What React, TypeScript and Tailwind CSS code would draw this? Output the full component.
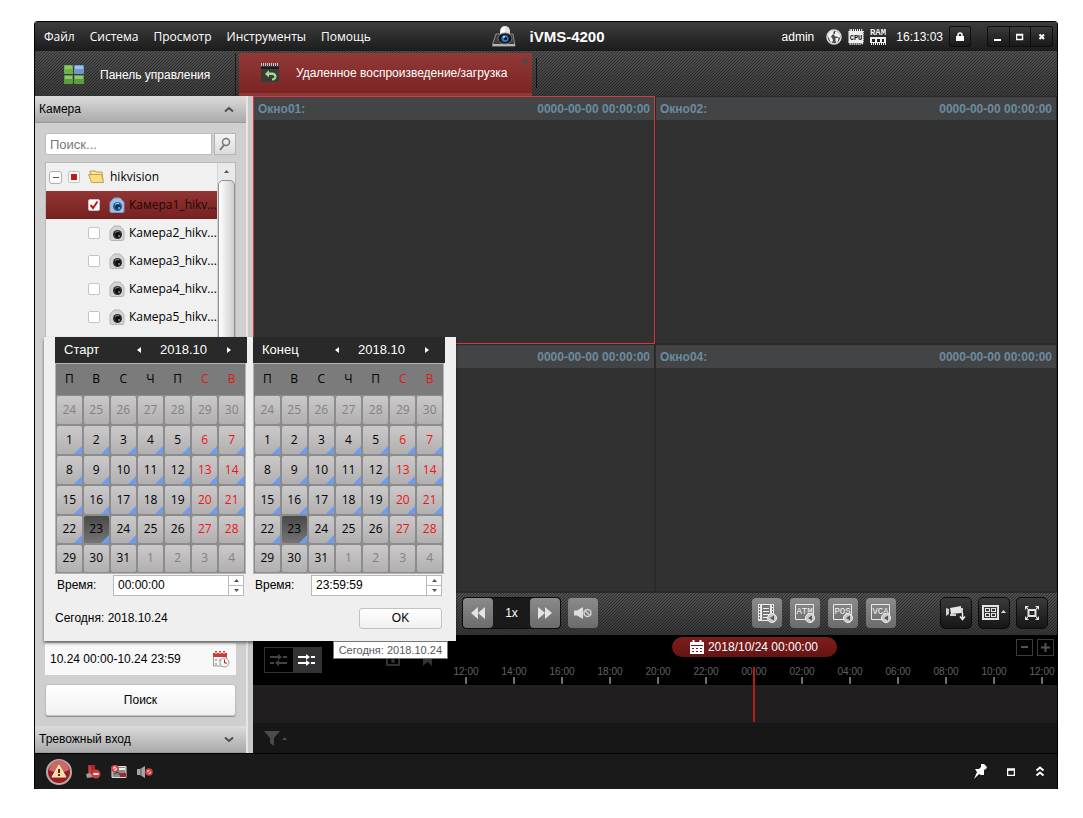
import { useState } from "react";
import type { ReactNode } from "react";
import clsx from "clsx";

const MENU = ["Файл", "Система", "Просмотр", "Инструменты", "Помощь"];
const CAMERAS = [1, 2, 3, 4, 5];
const WEEKDAYS = ["П", "В", "С", "Ч", "П", "С", "В"];
const HOURS = ["12:00", "14:00", "16:00", "18:00", "20:00", "22:00", "00:00", "02:00", "04:00", "06:00", "08:00", "10:00", "12:00"];

// October 2018 starts on Monday, the grid opens with the last week of September
const DAYS = [
  ...[24, 25, 26, 27, 28, 29, 30].map((day) => ({ day, current: false })),
  ...Array.from({ length: 31 }, (_, i) => ({ day: i + 1, current: true })),
  ...[1, 2, 3, 4].map((day) => ({ day, current: false })),
];
const WEEKS = [0, 1, 2, 3, 4, 5].map((w) => DAYS.slice(w * 7, w * 7 + 7));
const LAST_RECORDED = 24;

function Logo() {
  return (
    <svg width="24" height="22" viewBox="0 0 24 22">
      <path d="M4 8h17l2 12H0z" fill="#3c3c3c" stroke="#8c8c8c" />
      <path d="M1 19h22" stroke="#b5b5b5" strokeWidth="2" />
      <path d="M8 5a5 5 0 0 1 10 0v6H8z" fill="#e2e2e2" />
      <path d="M9 5a3 4 0 0 1 4-4v9H9z" fill="#fff" />
      <ellipse cx="13" cy="12.500" rx="7" ry="5.500" fill="#17181a" stroke="#777" />
      <circle cx="13" cy="12.500" r="3.500" fill="#2d78bf" />
      <circle cx="13.500" cy="12.500" r="1.500" fill="#08101c" />
      <circle cx="12" cy="11" r="1" fill="#bfe4ff" />
    </svg>
  );
}

function GlobeIcon() {
  return (
    <svg width="16" height="16" viewBox="0 0 16 16">
      <circle cx="8" cy="8" r="7" fill="#4c4c4c" stroke="#dcdcdc" strokeWidth="1.500" />
      <path d="M2 5l3-3h3l-1 2 1 1-2 1-1 2 1 1 1 2-1 3-2-2-1-3-1-1z" fill="#f1f1f1" />
      <path d="M9 2.500l2 0 3 3v3l-2 0-1-1-2 0-1-2 1-1z" fill="#f1f1f1" />
      <path d="M9.500 9l3 0-.500 3-1.500 2-1-2z" fill="#f1f1f1" />
    </svg>
  );
}

function CpuIcon() {
  return (
    <svg width="16" height="16" viewBox="0 0 16 16">
      <rect x="1" y="1" width="14" height="14" rx="2" fill="none" stroke="#eee" strokeWidth="2" strokeDasharray="1 1" />
      <rect x="1" y="2" width="14" height="12" fill="#eee" />
      <text x="8" y="10.500" textAnchor="middle" fontSize="7" fontWeight="bold" fill="#111" fontFamily="Liberation Mono, monospace">CPU</text>
    </svg>
  );
}

function RamIcon() {
  return (
    <svg width="16" height="16" viewBox="0 0 16 16">
      <text x="8" y="6" textAnchor="middle" fontSize="9" fontWeight="bold" fill="#eee" fontFamily="Liberation Mono, monospace">RAM</text>
      <rect x="0" y="8" width="16" height="6" fill="#eee" />
      <path d="M2 10h3v3H2zM7 10h3v3H7zM12 10h2v3h-2z" fill="#222" />
      <path d="M1 15h15" stroke="#eee" strokeWidth="2" strokeDasharray="1 1" />
    </svg>
  );
}

function CameraIcon({ active = false }: { active?: boolean }) {
  return (
    <svg width="16" height="16" viewBox="0 0 16 16">
      <path d="M1 5.500L5 1h6l4 4.500V14a1.500 1.500 0 0 1-1.500 1.500h-11A1.500 1.500 0 0 1 1 14z" fill={active ? "#9fc2ea" : "#d3d3d3"} stroke={active ? "#7f9fca" : "#b5b5b5"} />
      <circle cx="8.500" cy="9.500" r="4.500" fill={active ? "#2a5a96" : "#2c2a2b"} />
      <circle cx="9" cy="10" r="2.500" fill={active ? "#0f2c55" : "#0b0b0c"} />
      <path d="M6 7.500a3.500 3.500 0 0 1 4-1" stroke={active ? "#b8dcff" : "#b46a5f"} fill="none" />
      <circle cx="10" cy="11" r="1" fill={active ? "#8bc0f5" : "#6d90bd"} />
    </svg>
  );
}

function Chevron({ up = false }: { up?: boolean }) {
  return (
    <svg width="10" height="7" viewBox="0 0 10 7">
      <path d={up ? "M1 5.500L5 2l4 3.500" : "M1 1.500L5 5l4-3.500"} fill="none" stroke="#4d4d4d" strokeWidth="2" />
    </svg>
  );
}

function AccordionHeader({ title, up }: { title: string; up?: boolean }) {
  return (
    <button className="flex h-[27px] w-full shrink-0 items-center justify-between border-b border-[#9a9a9a] bg-gradient-to-b from-[#dcdcdc] to-[#aaaaaa] pr-3 pl-1">
      <span>{title}</span>
      <Chevron up={up} />
    </button>
  );
}

function Checkbox({ state, label, onChange }: { state: "on" | "off" | "partial"; label: string; onChange?: () => void }) {
  return (
    <span className="relative flex size-3 shrink-0">
      <input
        type="checkbox"
        aria-label={label}
        checked={state !== "off"}
        onChange={() => onChange?.()}
        className="size-3 appearance-none rounded-[2px] border border-[#c4c4c4] bg-white"
      />
      {state === "on" && (
        <svg className="pointer-events-none absolute inset-0" width="12" height="12" viewBox="0 0 12 12">
          <path d="M2.500 6l2.500 3 4.500-6.500" fill="none" stroke="#c4161c" strokeWidth="2" />
        </svg>
      )}
      {state === "partial" && <span className="pointer-events-none absolute inset-[3px] bg-[#c01a12]" />}
    </span>
  );
}

function VideoPane({ title, active }: { title?: string; active?: boolean }) {
  return (
    <div className={clsx("flex flex-col border bg-[#313131]", active ? "border-[#d5393c]" : "border-[#29292a]")}>
      <div className="flex h-[23px] items-center bg-[#434446] px-1 font-bold text-[#6b8ba0]">
        {title && <span>{title}</span>}
        <span className="ml-auto">0000-00-00 00:00:00</span>
      </div>
    </div>
  );
}

function GreyButton({ label, children }: { label: string; children: ReactNode }) {
  return (
    <button aria-label={label} className="flex size-[30px] items-center justify-center rounded-[4px] bg-gradient-to-b from-[#8b8b8b] to-[#6c6c6c]">
      {children}
    </button>
  );
}

function DarkButton({ label, children }: { label: string; children: ReactNode }) {
  return (
    <button aria-label={label} className="flex size-8 items-center justify-center rounded-[5px] border border-[#0c0c0c] bg-gradient-to-b from-[#3b3b3b] to-[#161616]">
      {children}
    </button>
  );
}

function PlayBadge() {
  return (
    <>
      <circle cx="16" cy="16" r="4.500" fill="#c9c9c9" stroke="#f2f2f2" />
      <path d="M18 13.500v5L14 16z" fill="#555" />
    </>
  );
}

function TagIcon({ text }: { text: string }) {
  return (
    <svg width="22" height="22" viewBox="0 0 22 22">
      <path d="M1.500 2.500h18v15h-18z" fill="none" stroke="#e8e8e8" />
      <text x="10.500" y="12" textAnchor="middle" fontSize="9" fill="#f4f4f4" fontFamily="Liberation Mono, monospace">{text}</text>
      <PlayBadge />
    </svg>
  );
}

function Calendar({ title, time }: { title: string; time: string }) {
  const [selected, setSelected] = useState(23);
  const [value, setValue] = useState(time);

  return (
    <section className="w-48">
      <header className="flex h-[26px] items-center bg-[#292929] pl-[9px] text-[13px] text-white">
        <span className="w-[70px]">{title}</span>
        <button aria-label="Предыдущий месяц" className="flex w-[9px] justify-center">
          <svg width="4" height="6" viewBox="0 0 4 6"><path d="M4 0v6L0 3z" fill="#fff" /></svg>
        </button>
        <span className="flex-1 text-center">2018.10</span>
        <button aria-label="Следующий месяц" className="mr-[14px] flex w-[9px] justify-center">
          <svg width="4" height="6" viewBox="0 0 4 6"><path d="M0 0v6l4-3z" fill="#fff" /></svg>
        </button>
      </header>
      <table className="w-[191px] table-fixed border-collapse border border-[#b4b4b4] bg-[#8c8c8c] text-center font-[Open_Sans,Noto_Sans,sans-serif]">
        <thead>
          <tr className="h-[31px] bg-[#7b7b7b]">
            {WEEKDAYS.map((d, i) => (
              <th key={i} className={clsx("p-0 font-normal", i > 4 ? "text-[#e01818]" : "text-black")}>{d}</th>
            ))}
          </tr>
        </thead>
        <tbody>
          {WEEKS.map((week, w) => (
            <tr key={w}>
              {week.map(({ day, current }, i) => {
                const isSelected = current && day === selected;
                return (
                  <td key={i} className="p-px">
                    <button
                      onClick={() => current && setSelected(day)}
                      className={clsx(
                        "relative block w-full overflow-hidden rounded-[2px]",
                        w < 4 ? "h-7" : "h-[27px]",
                        isSelected ? "bg-gradient-to-b from-[#4a4a4a] to-[#757575]" : "bg-gradient-to-b from-[#cbc9c9] to-[#b1afaf]",
                        !current ? "text-[#828282]" : i > 4 ? "text-[#f01414]" : "text-black"
                      )}
                    >
                      {day}
                      {current && day <= LAST_RECORDED && (
                        <svg className="absolute right-0 bottom-0" width="8" height="8" viewBox="0 0 8 8">
                          <path d="M8 0v8H0z" fill="#6b9df8" />
                        </svg>
                      )}
                    </button>
                  </td>
                );
              })}
            </tr>
          ))}
        </tbody>
      </table>
      <div className="mt-px flex h-[21px] items-center pl-[2px]">
        <label htmlFor={"time-" + time} className="w-14">Время:</label>
        <div className="flex h-[21px] w-[131px] border border-[#b9b9b9] bg-white">
          <input
            id={"time-" + time}
            value={value}
            onChange={(e) => setValue(e.target.value)}
            className="min-w-0 flex-1 bg-transparent pl-1 outline-none"
          />
          <div className="flex w-[15px] flex-col border-l border-[#b9b9b9]">
            <button aria-label="Больше" className="flex flex-1 items-center justify-center">
              <svg width="5" height="3" viewBox="0 0 5 3"><path d="M0 3h5L2.500 0z" fill="#555" /></svg>
            </button>
            <button aria-label="Меньше" className="flex flex-1 items-center justify-center border-t border-[#b9b9b9]">
              <svg width="5" height="3" viewBox="0 0 5 3"><path d="M0 0h5L2.500 3z" fill="#555" /></svg>
            </button>
          </div>
        </div>
      </div>
    </section>
  );
}

function DatePopup() {
  return (
    <div className="absolute top-[315px] left-[9px] w-[412px] bg-[#efefef] px-[11px] shadow-[0_2px_3px_rgba(0,0,0,0.5)]">
      <div className="flex gap-[6px]">
        <Calendar title="Старт" time="00:00:00" />
        <Calendar title="Конец" time="23:59:59" />
      </div>
      <div className="flex h-[45px] items-center justify-between pr-[3px]">
        <span>Сегодня: 2018.10.24</span>
        <button className="h-[21px] w-[83px] rounded-[3px] border border-[#c2c2c2] bg-gradient-to-b from-white to-[#f0f0f0]">OK</button>
      </div>
      <div role="tooltip" className="absolute top-full right-2 flex h-[18px] items-center border border-[#767676] bg-white px-[5px] text-[11px] text-[#575757]">
        Сегодня: 2018.10.24
      </div>
    </div>
  );
}

function TitleBar() {
  return (
    <header className="grid h-[29px] grid-cols-[1fr_auto_1fr] items-center bg-gradient-to-b from-[#3d3d3d] to-[#1c1c1c] pr-1 pl-[9px] text-white">
      <nav className="flex gap-[15px] font-[Open_Sans,Noto_Sans,sans-serif]">
        {MENU.map((item) => (
          <button key={item}>{item}</button>
        ))}
      </nav>
      <div className="flex items-center gap-[13px]">
        <Logo />
        <h1 className="text-[15px] font-bold">iVMS-4200</h1>
      </div>
      <div className="flex items-center justify-end">
        <span className="mr-3">admin</span>
        <div className="mr-[10px] flex gap-[6px]">
          <GlobeIcon />
          <CpuIcon />
          <RamIcon />
        </div>
        <span className="mr-[6px]">16:13:03</span>
        <button aria-label="Блокировка" className="mr-4 flex h-[21px] w-[22px] items-center justify-center rounded-[2px] border border-[#0e0e0e] bg-gradient-to-b from-[#3a3a3a] to-[#191919]">
          <svg width="8" height="10" viewBox="0 0 8 10">
            <path d="M2 5V3a2 2 0 0 1 4 0v2" fill="none" stroke="#fff" strokeWidth="1.500" />
            <path d="M0 4h8v5H0z" fill="#fff" />
          </svg>
        </button>
        <div className="flex h-[21px] w-[66px] divide-x divide-[#0c0c0c] rounded-[2px] border border-[#0e0e0e] bg-gradient-to-b from-[#3a3a3a] to-[#191919]">
          <button aria-label="Свернуть" className="flex flex-1 items-center justify-center">
            <svg width="8" height="8" viewBox="0 0 8 8"><path d="M0 6h7v2H0z" fill="#fff" /></svg>
          </button>
          <button aria-label="Развернуть" className="flex flex-1 items-center justify-center">
            <svg width="8" height="8" viewBox="0 0 8 8"><path d="M.500 1.500h6v5h-6zM0 2h7" fill="none" stroke="#fff" strokeWidth="1.500" /></svg>
          </button>
          <button aria-label="Закрыть" className="flex flex-1 items-center justify-center">
            <svg width="8" height="8" viewBox="0 0 8 8"><path d="M1.500 1.500l4.500 4.500M6 1.500L1.500 6" stroke="#fff" strokeWidth="2" /></svg>
          </button>
        </div>
      </div>
    </header>
  );
}

function TabBar() {
  return (
    <div className="flex h-[45px] items-end bg-[linear-gradient(rgba(0,0,0,0),rgba(0,0,0,0.25)),linear-gradient(135deg,#505050_25%,#303030_25%_50%,#505050_50%_75%,#303030_75%)] bg-[length:auto,3px_3px] text-white">
      <button className="flex h-[43px] w-[201px] items-center gap-4 border-r border-[#1b1b1b] pl-[29px]">
        <svg width="20" height="20" viewBox="0 0 20 20">
          <rect x="0" y="0" width="9" height="9" rx="1" fill="#6fb04c" />
          <rect x="10" y="0" width="10" height="9" rx="1" fill="#7197c8" />
          <rect x="0" y="10" width="9" height="9" rx="1" fill="#5b9e3c" />
          <rect x="10" y="10" width="10" height="9" rx="1" fill="#5b9e3c" />
          <path d="M1 1h7v3H1zM1 11h7v3H1zM11 11h8v3h-8z" fill="#8dc96c" />
          <path d="M11 1h8v3h-8z" fill="#a0c0e8" />
        </svg>
        <span>Панель управления</span>
      </button>
      <div className="relative ml-[3px] flex h-[43px] w-[293px] items-center border-b-[3px] border-[#8f3836] bg-gradient-to-b from-[#923938] to-[#7c2423]">
        <button className="flex h-full items-center gap-4 pl-[22px]">
          <svg width="19" height="20" viewBox="0 0 19 20">
            <rect x="0" y="2" width="18" height="17" fill="#3a3c3b" />
            <path d="M0 1.500h18" stroke="#c9c9c9" strokeWidth="3" strokeDasharray="1 1" />
            <path d="M0 4h18v2H0z" fill="#1c1c1c" />
            <path d="M8 7l-4 4 4 3.500V12h3c3 0 3 3.500 0 3.500v2c6 0 6-8 0-8H8z" fill="#a5d98c" />
          </svg>
          <span>Удаленное воспроизведение/загрузка</span>
        </button>
        <button aria-label="Закрыть вкладку" className="absolute top-[5px] right-[3px]">
          <svg width="7" height="7" viewBox="0 0 7 7"><path d="M1 1l5 5M6 1L1 6" stroke="#4c4a4a" strokeWidth="2" /></svg>
        </button>
      </div>
      <div className="mb-2 ml-1 h-[30px] w-px bg-[#111]" />
    </div>
  );
}

function Sidebar() {
  const [checked, setChecked] = useState<number[]>([1]);
  const toggle = (n: number) => setChecked((list) => (list.includes(n) ? list.filter((c) => c !== n) : [...list, n]));

  return (
    <aside className="flex w-[218px] shrink-0 border-r-[5px] border-[#c9c9c9] bg-[#cfcfcf] text-black">
      <div className="flex min-w-0 flex-1 flex-col border-r-2 border-[#e6e6e6]">
        <AccordionHeader title="Камера" up />
        <div className="flex flex-1 flex-col px-[10px] py-[10px]">
          <div className="flex gap-[2px]">
            <input placeholder="Поиск..." aria-label="Поиск" className="h-[22px] w-[167px] rounded-[2px] border border-[#bcbcbc] bg-white pl-1 text-[13px] outline-none placeholder:text-[#777]" />
            <button aria-label="Найти" className="flex h-[22px] flex-1 items-center justify-center border border-[#b5b5b5] bg-gradient-to-b from-[#f4f4f4] to-[#dcdcdc]">
              <svg width="12" height="14" viewBox="0 0 12 14">
                <circle cx="7" cy="5" r="3.500" fill="none" stroke="#777" strokeWidth="1.500" />
                <path d="M5 8l-4 5" stroke="#777" strokeWidth="2" />
              </svg>
            </button>
          </div>
          <div className="mt-[7px] flex flex-1 border border-[#b9b9b9] bg-[#f0f0f0] font-[Open_Sans,Noto_Sans,sans-serif]">
            <ul className="w-[171px]">
              <li className="flex h-7 items-center pl-[3px]">
                <button aria-label="Свернуть группу" className="mr-[6px] flex size-[13px] items-center justify-center rounded-[3px] border border-[#b0b0b0] bg-white">
                  <span className="h-px w-[6px] bg-[#555]" />
                </button>
                <Checkbox state="partial" label="hikvision" />
                <svg className="mr-[5px] ml-2" width="17" height="14" viewBox="0 0 17 14">
                  <path d="M2 3V1h5l1 1h6l1 8-2 2z" fill="#f6e7a6" stroke="#c19a4a" />
                  <path d="M.500 4.500h13l2 8h-12z" fill="#fbdd84" stroke="#c9a04e" />
                </svg>
                <span>hikvision</span>
              </li>
              {CAMERAS.map((n) => (
                <li key={n} className={clsx("flex h-7 items-center pl-[42px]", n === 1 && "bg-gradient-to-b from-[#923534] to-[#762120]")}>
                  <Checkbox state={checked.includes(n) ? "on" : "off"} label={"Камера" + n} onChange={() => toggle(n)} />
                  <span className="mr-1 ml-[9px]"><CameraIcon active={n === 1} /></span>
                  <span className={n === 1 ? "text-[#1c0707]" : undefined}>Камера{n}_hikv...</span>
                </li>
              ))}
            </ul>
            <div className="flex flex-1 flex-col border-l border-[#d5d5d5] bg-[#e9e9e9]">
              <span className="flex h-[17px] items-center justify-center">
                <svg width="5" height="3" viewBox="0 0 5 3"><path d="M0 3h5L2.500 0z" fill="#555" /></svg>
              </span>
              <span className="flex-1 rounded-t-[5px] border border-[#8f8f8f] bg-gradient-to-r from-white to-[#cecece]" />
            </div>
          </div>
          <div className="mt-[6px] flex h-8 items-center justify-between bg-[#f8f8f8] pr-[6px] pl-[5px]">
            <span>10.24 00:00-10.24 23:59</span>
            <button aria-label="Выбрать период">
              <svg width="17" height="17" viewBox="0 0 17 17">
                <path d="M.500 3h13v12H.500z" fill="#f5f5f5" stroke="#999" />
                <path d="M0 2h14v4H0z" fill="#d0383b" />
                <path d="M3 0v4M7 0v4M11 0v4" stroke="#d0383b" strokeWidth="2" />
                <path d="M3 1v2M7 1v2M11 1v2" stroke="#fff" />
                <path d="M2 8h2v2H2zM6 8h2v2H6zM2 12h2v2H2z" fill="#b5b5b5" />
                <circle cx="11.500" cy="11.500" r="4.500" fill="#f7f7f7" stroke="#999" />
                <path d="M11.500 8.500v3.500h2.500" fill="none" stroke="#c01a1a" />
              </svg>
            </button>
          </div>
          <button className="mt-[9px] h-8 rounded-[3px] border border-[#c0c0c0] bg-gradient-to-b from-white to-[#f1f1f1] shadow-[0_1px_1px_rgba(0,0,0,0.3)]">Поиск</button>
        </div>
        <AccordionHeader title="Тревожный вход" />
      </div>
    </aside>
  );
}

function PlaybackBar() {
  return (
    <div className="flex h-[43px] items-center justify-between border-t border-[#2a2a2a] bg-[linear-gradient(rgba(0,0,0,0),rgba(0,0,0,0.3)),linear-gradient(135deg,#505050_25%,#303030_25%_50%,#505050_50%_75%,#303030_75%)] bg-[length:auto,3px_3px] pr-[9px] pb-[2px] pl-[209px]">
      <div className="flex items-center gap-[7px]">
        <div className="flex items-center rounded-[4px] border border-[#0d0d0d] bg-[#1a1a1a]">
          <GreyButton label="Медленнее">
            <svg width="16" height="12" viewBox="0 0 16 12"><path d="M8 0v12L1 6zM15 0v12L8 6z" fill="#e4e4e4" /></svg>
          </GreyButton>
          <span className="w-[37px] text-center text-white">1x</span>
          <GreyButton label="Быстрее">
            <svg width="16" height="12" viewBox="0 0 16 12"><path d="M1 0v12l7-6zM8 0v12l7-6z" fill="#e4e4e4" /></svg>
          </GreyButton>
        </div>
        <GreyButton label="Звук">
          <svg width="18" height="12" viewBox="0 0 18 12">
            <path d="M0 3.500h3L9 0v12L3 8.500H0z" fill="#dedede" />
            <circle cx="13.500" cy="6" r="3.500" fill="none" stroke="#d0d0d0" strokeWidth="1.500" />
            <path d="M11 3.500l5 5" stroke="#d0d0d0" strokeWidth="1.500" />
          </svg>
        </GreyButton>
      </div>
      <div className="flex items-center gap-[44px]">
        <div className="flex gap-2">
          <GreyButton label="Записи">
            <svg width="22" height="22" viewBox="0 0 22 22">
              <path d="M2 2h16v17H2z" fill="#e4e4e4" />
              <path d="M3.500 3v15M16.500 3v15" stroke="#666" strokeDasharray="2 1" />
              <path d="M5.500 2.500h9v16h-9z" fill="#767676" stroke="#f0f0f0" />
              <path d="M7 6.500h6M7 9.500h6M7 12.500h6M7 15.500h4" stroke="#f0f0f0" />
              <PlayBadge />
            </svg>
          </GreyButton>
          <GreyButton label="ATM"><TagIcon text="ATM" /></GreyButton>
          <GreyButton label="POS"><TagIcon text="POS" /></GreyButton>
          <GreyButton label="VCA"><TagIcon text="VCA" /></GreyButton>
        </div>
        <div className="flex gap-[6px]">
          <DarkButton label="Загрузка">
            <svg width="20" height="16" viewBox="0 0 20 16">
              <path d="M4 3l11-2v7L5 9z" fill="#e6e6e6" />
              <path d="M0 3l3 1v5l-3 2zM15 3h2v5h-2zM4 9h6v2H4z" fill="#cfcfcf" />
              <path d="M16.500 8v5M14 11.500l2.500 3 2.500-3" fill="none" stroke="#eee" strokeWidth="1.500" />
            </svg>
          </DarkButton>
          <DarkButton label="Сетка окон">
            <svg width="24" height="16" viewBox="0 0 24 16">
              <path d="M0 0h17v15H0z" fill="#e4e4e4" />
              <path d="M2 2h13v11H2z" fill="#333" />
              <path d="M3 3h5v4H3zM9 3h5v4H9zM3 8h5v4H3zM9 8h5v4H9z" fill="#e4e4e4" />
              <path d="M4 4h3v2H4zM10 4h3v2h-3zM4 9h3v2H4zM10 9h3v2h-3z" fill="#333" />
              <path d="M19 8h5l-2.500-3z" fill="#ddd" />
            </svg>
          </DarkButton>
          <DarkButton label="На весь экран">
            <svg width="14" height="14" viewBox="0 0 14 14">
              <path d="M3.500 4h7v6h-7z" fill="none" stroke="#e4e4e4" strokeWidth="2" />
              <path d="M0 0h4L0 4zM14 0h-4l4 4zM0 14h4l-4-4zM14 14h-4l4-4z" fill="#e4e4e4" />
              <path d="M1 1l2 2M13 1l-2 2M1 13l2-2M13 13l-2-2" stroke="#e4e4e4" />
            </svg>
          </DarkButton>
        </div>
      </div>
    </div>
  );
}

function ModeIcon({ both }: { both?: boolean }) {
  return (
    <svg width="18" height="14" viewBox="0 0 18 14" fill="none" stroke="currentColor" strokeWidth="2">
      <path d="M0 4h9M13 4h4" />
      <path d="M8 1l4 3-4 3z" fill="currentColor" stroke="none" />
      {both ? <path d="M0 10h9M13 10h4" /> : <path d="M0 10h4M8 10h9" />}
      <path d={both ? "M8 7l4 3-4 3z" : "M9 7l-4 3 4 3z"} fill="currentColor" stroke="none" />
    </svg>
  );
}

function Timeline() {
  return (
    <div className="bg-black">
      <div className="flex h-[50px] pr-[3px]">
        <div className="flex w-[201px] shrink-0 items-center pl-[11px]">
          <div className="flex h-[26px] w-[58px] border border-[#333]">
            <button aria-label="Асинхронно" className="flex flex-1 items-center justify-center text-[#444]"><ModeIcon /></button>
            <button aria-label="Синхронно" className="flex flex-1 items-center justify-center bg-[#323235] text-white"><ModeIcon both /></button>
          </div>
          <button aria-label="Снимок" className="ml-[64px] text-[#333]">
            <svg width="14" height="12" viewBox="0 0 14 12"><path d="M1 3h3l1-2h4l1 2h3v8H1z" fill="none" stroke="currentColor" strokeWidth="2" /><circle cx="7" cy="7" r="2" fill="currentColor" /></svg>
          </button>
          <button aria-label="Метка" className="ml-[23px] text-[#333]">
            <svg width="9" height="12" viewBox="0 0 9 12"><path d="M0 0h9v12L4.500 8 0 12z" fill="currentColor" /></svg>
          </button>
        </div>
        <div className="flex flex-1 flex-col justify-between">
          <div className="grid h-6 grid-cols-[1fr_auto_1fr] items-center">
            <button className="col-start-2 flex h-5 w-[165px] items-center justify-center gap-1 rounded-full bg-gradient-to-b from-[#7c1e1d] to-[#651413] text-white">
              <svg width="14" height="14" viewBox="0 0 14 14">
                <path d="M0 2h14v12H0z" fill="#fff" />
                <path d="M3.500 0v3M10.500 0v3" stroke="#fff" strokeWidth="2" />
                <path d="M1 5.500h12" stroke="#701817" />
                <path d="M2 8h2v1H2zM6 8h2v1H6zM10 8h2v1h-2zM2 11h2v1H2zM6 11h2v1H6zM10 11h2v1h-2z" fill="#701817" />
              </svg>
              <span>2018/10/24 00:00:00</span>
            </button>
            <div className="flex gap-1 justify-self-end">
              <button aria-label="Уменьшить" className="flex size-[17px] items-center justify-center border border-[#3c3c3c]">
                <span className="h-[2px] w-[7px] bg-[#555]" />
              </button>
              <button aria-label="Увеличить" className="flex size-[17px] items-center justify-center border border-[#3c3c3c]">
                <svg width="9" height="9" viewBox="0 0 9 9"><path d="M4.500 0v9M0 4.500h9" stroke="#555" strokeWidth="2" /></svg>
              </button>
            </div>
          </div>
          <div className="flex justify-between text-[10px] leading-[10px] text-[#5c6468]">
            {HOURS.map((hour, i) => (
              <div key={i} className="relative flex w-6 flex-col items-center pb-px">
                <span>{hour}</span>
                <span className="h-[7px] w-[2px] bg-[#707070]" />
                {i === 6 && <span className="absolute top-0 h-[55px] w-[2px] bg-[#b41c14]" />}
              </div>
            ))}
          </div>
        </div>
      </div>
      <div className="h-[38px] bg-[#201e1f]" />
      <div className="flex h-[30px] items-center bg-[#171717] pl-[11px]">
        <button aria-label="Фильтр" className="flex items-center gap-[2px]">
          <svg width="16" height="15" viewBox="0 0 16 15"><path d="M0 0h16L10 7v8l-4-3V7z" fill="#4a4a4a" /></svg>
          <svg width="5" height="3" viewBox="0 0 5 3"><path d="M0 3h5L2.500 0z" fill="#4a4a4a" /></svg>
        </button>
      </div>
    </div>
  );
}

function StatusBar() {
  return (
    <footer className="flex h-[35px] items-center justify-between bg-[#1a1a1a] pr-3 pl-[11px]">
      <div className="flex items-center">
        <button aria-label="Тревоги" className="mr-[14px]">
          <svg width="26" height="26" viewBox="0 0 26 26">
            <circle cx="13" cy="13" r="12" fill="#9b1d1f" stroke="#b9a9a9" strokeWidth="2" />
            <path d="M3 11a10 10 0 0 1 20 0c-5 3-15 3-20 0z" fill="#c96a68" />
            <path d="M13 6l7 12H6z" fill="#f7dd9d" stroke="#fff3d6" strokeLinejoin="round" />
            <path d="M13 10v4M13 15v2" stroke="#7a1a14" strokeWidth="2" />
          </svg>
        </button>
        <div className="flex items-center gap-[10px]">
          <button aria-label="Очистить">
            <svg width="15" height="14" viewBox="0 0 15 14">
              <path d="M2 0h7v7l-2 4H2z" fill="#a82a2c" />
              <path d="M4 1v7" stroke="#d66" />
              <path d="M0 9l4-1 4 4-7 1z" fill="#9c9c9c" />
              <circle cx="10" cy="9" r="4.500" fill="#d03a3a" />
              <path d="M7.500 9h5" stroke="#fff" strokeWidth="2" />
            </svg>
          </button>
          <button aria-label="Всплывающие окна">
            <svg width="16" height="14" viewBox="0 0 16 14">
              <path d="M1 1.500h14v11H1z" fill="#8a8a8a" stroke="#ddd" />
              <path d="M8 4h6" stroke="#eee" strokeWidth="2" />
              <path d="M3 9l4-2 2 3" stroke="#333" fill="none" />
              <path d="M9 8h6v4H9z" fill="#a3282a" />
              <circle cx="4" cy="3.500" r="3" fill="#f3dada" stroke="#d03a3a" strokeWidth="1.500" />
              <path d="M2 5l4-3" stroke="#d03a3a" />
            </svg>
          </button>
          <button aria-label="Звук тревоги">
            <svg width="16" height="14" viewBox="0 0 16 14">
              <path d="M0 4h3l5-3v12l-5-3H0z" fill="#a5a5a5" />
              <path d="M4 3v8" stroke="#555" />
              <circle cx="12" cy="7" r="3" fill="#e8b5b5" stroke="#d03a3a" strokeWidth="1.500" />
              <path d="M10 9l4-4" stroke="#d03a3a" strokeWidth="1.500" />
            </svg>
          </button>
        </div>
      </div>
      <div className="flex items-center gap-5">
        <button aria-label="Закрепить">
          <svg width="13" height="15" viewBox="0 0 13 15"><path d="M7 0h3l3 3-1 2-2 1 0 5-3 0-2-1-5 5 3-7-2-3 4 0 2-2z" fill="#fff" /></svg>
        </button>
        <button aria-label="Развернуть панель">
          <svg width="8" height="8" viewBox="0 0 8 8"><path d="M.500 1h7v6.500h-7zM0 2h8" fill="none" stroke="#fff" strokeWidth="1.500" /></svg>
        </button>
        <button aria-label="Показать">
          <svg width="10" height="11" viewBox="0 0 10 11"><path d="M1.500 4.500L5 1.500l3.500 3M1.500 9.500L5 6.500l3.500 3" fill="none" stroke="#fff" strokeWidth="2" /></svg>
        </button>
      </div>
    </footer>
  );
}

export default function App() {
  return (
    <div className="flex min-h-screen flex-col bg-white pt-[21px] pr-[25px] pb-[29px] pl-[34px] font-[Liberation_Sans,Arial,sans-serif] text-[12px] leading-4">
      <div className="relative flex flex-1 flex-col rounded-t-[4px] border border-b-0 border-black bg-black">
        <TitleBar />
        <TabBar />
        <div className="flex flex-1 border-b border-black">
          <Sidebar />
          <main className="flex min-w-0 flex-1 flex-col">
            <div className="grid flex-1 grid-cols-2 grid-rows-2">
              <VideoPane title="Окно01:" active />
              <VideoPane title="Окно02:" />
              <VideoPane />
              <VideoPane title="Окно04:" />
            </div>
            <PlaybackBar />
            <Timeline />
          </main>
        </div>
        <StatusBar />
        <DatePopup />
      </div>
    </div>
  );
}
